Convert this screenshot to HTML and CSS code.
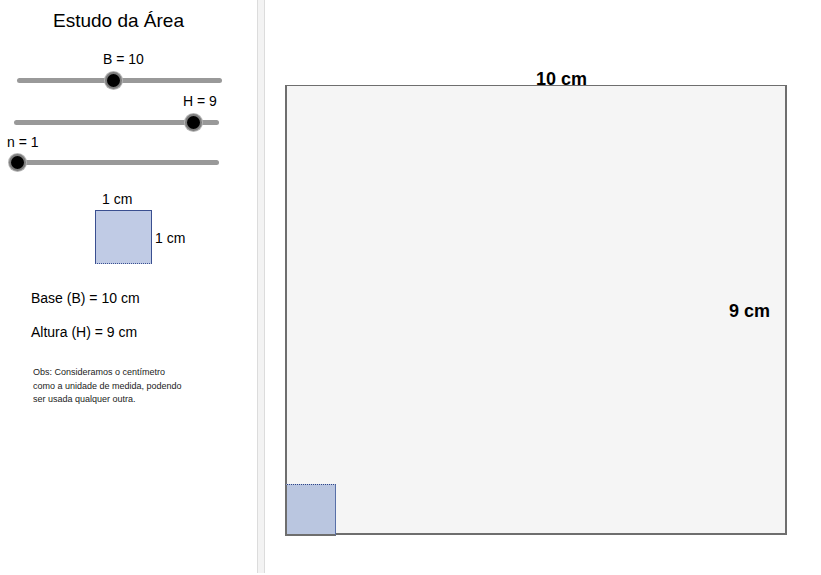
FILE: index.html
```html
<!DOCTYPE html>
<html lang="pt">
<head>
<meta charset="utf-8">
<title>Estudo da Área</title>
<link rel="stylesheet" href="styles.css">
</head>
<body>
<div class="app">
  <div class="left">
    <div class="title">Estudo da Área</div>

    <div class="obj lbl" style="left:103px;top:51px">B = 10</div>
    <div class="obj track" style="left:17px;top:78px;width:205px"></div>
    <div class="obj knob" style="left:105px;top:72px"></div>

    <div class="obj lbl" style="left:183px;top:93px">H = 9</div>
    <div class="obj track" style="left:14px;top:120px;width:205px"></div>
    <div class="obj knob" style="left:185px;top:114px"></div>

    <div class="obj lbl" style="left:7px;top:134px">n = 1</div>
    <div class="obj track" style="left:11px;top:160px;width:208px"></div>
    <div class="obj knob" style="left:9px;top:154px"></div>

    <div class="obj lbl" style="left:102px;top:191px">1 cm</div>
    <div class="obj unit" style="left:95px;top:210px"></div>
    <div class="obj lbl" style="left:155px;top:230px">1 cm</div>

    <div class="obj lbl" style="left:31px;top:290px">Base (B) = 10 cm</div>
    <div class="obj lbl" style="left:31px;top:324px">Altura (H) = 9 cm</div>

    <div class="obj obs" style="left:33px;top:366px">Obs: Consideramos o centímetro<br>como a unidade de medida, podendo<br>ser usada qualquer outra.</div>
  </div>
  <div class="divider"></div>
  <div class="right">
    <div class="obj big" style="left:20px;top:85px"></div>
    <div class="obj small" style="left:20px;top:484px"></div>
    <div class="obj blbl" style="left:271px;top:69px">10 cm</div>
    <div class="obj blbl" style="left:464px;top:301px">9 cm</div>
  </div>
</div>
</body>
</html>
```

FILE: styles.css
```css
html, body {
  margin: 0;
  padding: 0;
  background: #fff;
  font-family: "Liberation Sans", Arial, sans-serif;
  color: #000;
}
.app {
  display: flex;
  width: 821px;
  height: 575px;
}
.left {
  position: relative;
  width: 257px;
  height: 573px;
}
.divider {
  width: 6px;
  height: 573px;
  background: #f3f3f3;
  border-left: 1px solid #dcdcdc;
  border-right: 1px solid #dcdcdc;
}
.right {
  position: relative;
  flex: 1;
  height: 575px;
}
.title {
  font-size: 19px;
  padding-top: 9px;
  padding-left: 53px;
  line-height: 23px;
}
.obj {
  position: absolute;
}
.lbl {
  font-size: 14px;
  line-height: 16px;
  white-space: nowrap;
}
.track {
  height: 5px;
  border-radius: 3px;
  background: #999;
}
.knob {
  width: 13px;
  height: 13px;
  border-radius: 50%;
  background: #000;
  border: 2px solid #7c7c7c;
  box-shadow: 0 0 0 1px #b5b5b5;
}
.unit {
  width: 55px;
  height: 52px;
  background: #c0cbe5;
  border: 1px solid #3a4f90;
  border-bottom: 1px dotted #3a4f90;
}
.obs {
  font-size: 9px;
  line-height: 13.5px;
  color: #222;
  white-space: nowrap;
}
.big {
  width: 498px;
  height: 447px;
  background: #f5f5f5;
  border: 2px solid #6e6e6e;
  border-top-width: 1px;
}
.small {
  width: 48px;
  height: 49px;
  background: #bac6e0;
  border-top: 1px dotted #2e4588;
  border-right: 1px solid #5870a8;
  border-left: 2px solid #6e6e6e;
  border-bottom: 2px solid #6e6e6e;
}
.blbl {
  font-size: 18px;
  font-weight: bold;
  line-height: 21px;
  white-space: nowrap;
}
```
